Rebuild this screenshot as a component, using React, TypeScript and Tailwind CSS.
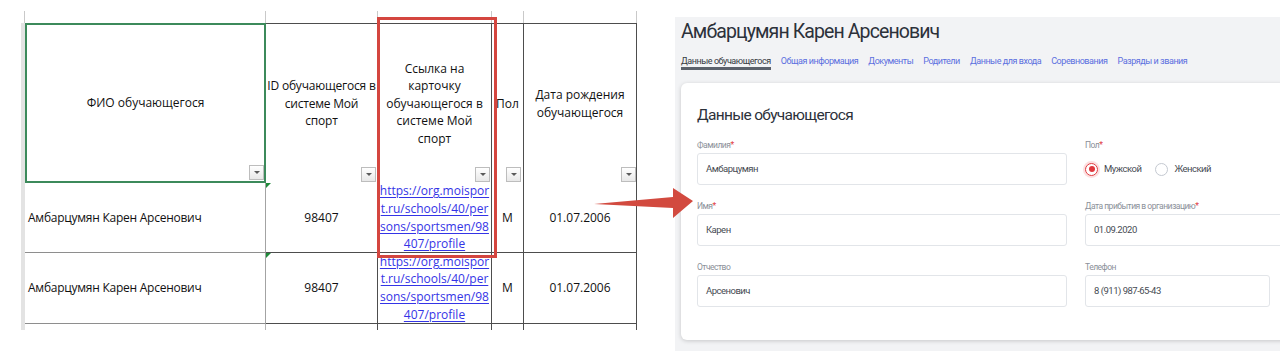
import React from "react";

function FilterButton({ className }: { className: string }) {
  return (
    <div
      className={`absolute bottom-[1px] w-[15px] h-[15px] border border-[#bdbdbd] bg-linear-to-b from-white to-[#e8e8e8] flex items-center justify-center ${className}`}
    >
      <div className="w-0 h-0 border-l-[3px] border-r-[3px] border-t-[3px] border-l-transparent border-r-transparent border-t-[#5a5a5a]" />
    </div>
  );
}

function GreenTick() {
  return (
    <div className="absolute left-0 top-0 w-0 h-0 border-t-[5px] border-r-[5px] border-t-[#1f8a3a] border-r-transparent" />
  );
}

function StudentRow({ h }: { h: string }) {
  return (
    <div className={`flex ${h}`}>
      <div className="w-[241px] border-r border-b border-[#a3a3a3] flex items-center pl-[3px] border-b-[#8e8e8e] tracking-[-0.25px]">
        Амбарцумян Карен Арсенович
      </div>
      <div className="relative w-[112px] border-r border-b border-[#4d4d4d] flex items-center justify-center">
        98407
        <GreenTick />
      </div>
      <div className="w-[114px] border-r border-b border-[#4d4d4d] flex items-center justify-center text-center leading-[17.6px]">
        <a className="text-[#3434e6] underline underline-offset-2">
          https://org.moispor
          <br />
          t.ru/schools/40/per
          <br />
          sons/sportsmen/98
          <br />
          407/profile
        </a>
      </div>
      <div className="w-[32px] border-r border-b border-[#4d4d4d] flex items-center justify-center">М</div>
      <div className="w-[113px] border-r border-b border-[#4d4d4d] flex items-center justify-center">01.07.2006</div>
    </div>
  );
}

function Spreadsheet() {
  return (
    <div className="w-[675px] shrink-0 pt-[11px] pl-[21px] font-['Open_Sans',sans-serif] text-[12px] text-[#111]">
      {/* gridlines above the header row */}
      <div className="flex h-[12px] ml-[3px] border-l border-[#c9c9c9]">
        <div className="w-[241px] border-r border-[#c9c9c9]" />
        <div className="w-[112px] border-r border-[#c9c9c9]" />
        <div className="w-[114px] border-r border-[#c9c9c9]" />
        <div className="w-[32px] border-r border-[#c9c9c9]" />
        <div className="w-[113px] border-r border-[#c9c9c9]" />
      </div>

      <div className="border-l-4 border-[#e3e3e3]">
        {/* header */}
        <div className="flex h-[160px] leading-[17.6px] text-center whitespace-nowrap">
          <div className="relative w-[241px] border-2 border-[#3c8a5b] flex items-center justify-center">
            ФИО обучающегося
            <FilterButton className="right-0" />
          </div>
          <div className="relative w-[112px] border-t border-r border-[#4d4d4d] flex items-center justify-center tracking-[-0.2px]">
            <span>
              ID обучающегося в
              <br />
              системе Мой
              <br />
              спорт
            </span>
            <FilterButton className="right-[1px]" />
          </div>
          <div className="relative w-[114px] border-t border-r border-[#4d4d4d] flex items-center justify-center">
            <span>
              Ссылка на
              <br />
              карточку
              <br />
              обучающегося в
              <br />
              системе Мой
              <br />
              спорт
            </span>
            <FilterButton className="right-[1px]" />
          </div>
          <div className="relative w-[32px] border-t border-r border-[#4d4d4d] flex items-center justify-center">
            Пол
            <FilterButton className="right-[2px]" />
          </div>
          <div className="relative w-[113px] border-t border-r border-[#4d4d4d] flex items-center justify-center">
            <span>
              Дата рождения
              <br />
              обучающегося
            </span>
            <FilterButton className="right-0" />
          </div>
        </div>

        <StudentRow h="h-[70px]" />
        <StudentRow h="h-[71px]" />

        {/* grid stub below the last row */}
        <div className="flex h-[6px]">
          <div className="w-[241px] border-r border-[#b5b5b5]" />
          <div className="w-[112px] border-r border-[#4d4d4d]" />
          <div className="w-[114px] border-r border-[#4d4d4d]" />
          <div className="w-[32px] border-r border-[#4d4d4d]" />
          <div className="w-[113px] border-r border-[#4d4d4d]" />
        </div>
      </div>
    </div>
  );
}

function Label({ text, required }: { text: string; required?: boolean }) {
  return (
    <div className="mb-[2px] text-[8.5px] leading-[12px] text-[#8b9099] tracking-[-0.5px]">
      {text}
      {required && <span className="text-[#e0393e]">*</span>}
    </div>
  );
}

function Field({
  label,
  value,
  required,
  inputClass,
}: {
  label: string;
  value: string;
  required?: boolean;
  inputClass: string;
}) {
  return (
    <div>
      <Label text={label} required={required} />
      <div
        className={`h-[32px] border border-[#e2e5e9] rounded-[3px] pl-[8px] flex items-center text-[9.5px] text-[#464b53] tracking-[-0.5px] ${inputClass}`}
      >
        {value}
      </div>
    </div>
  );
}

function StudentCard() {
  const tabs = ["Общая информация", "Документы", "Родители", "Данные для входа", "Соревнования", "Разряды и звания"];

  return (
    <div className="w-[605px] shrink-0 mt-[17px] bg-[#f2f3f5] pl-[6px] overflow-hidden font-['Roboto',sans-serif]">
      <h1 className="pt-[1px] text-[19.5px] leading-[28px] text-[#2c313a] tracking-[-0.9px] whitespace-nowrap">
        Амбарцумян Карен Арсенович
      </h1>

      <nav className="mt-[9px] flex gap-[10px] text-[9px] leading-[12px] tracking-[-0.45px] whitespace-nowrap">
        <span className="border-b-[3px] border-[#5b616b] text-[#353a42]">Данные обучающегося</span>
        {tabs.map((t) => (
          <span key={t} className="text-[#5b6fdf]">
            {t}
          </span>
        ))}
      </nav>

      <div className="mt-[13px] w-[640px] bg-white rounded-[6px] shadow-[0_1px_4px_rgba(0,0,0,0.18)] pl-[16px] pt-[22px] pb-[33px]">
        <h2 className="text-[15.5px] leading-[20px] text-[#2c313a] tracking-[-0.7px]">Данные обучающегося</h2>

        <div className="mt-[14px] grid grid-cols-[370px_1fr] gap-x-[18px] gap-y-[15px]">
          <Field label="Фамилия" required value="Амбарцумян" inputClass="w-full" />

          <div>
            <Label text="Пол" required />
            <div className="h-[32px] flex items-center text-[9.5px] text-[#464b53] tracking-[-0.5px]">
              <div className="w-[13px] h-[13px] rounded-full border-[1.5px] border-[#e0393e] ring-2 ring-[#fde0e1] flex items-center justify-center">
                <div className="w-[6px] h-[6px] rounded-full bg-[#e0393e]" />
              </div>
              <span className="ml-[6px]">Мужской</span>
              <div className="ml-[14px] w-[13px] h-[13px] rounded-full border border-[#c4c9d1]" />
              <span className="ml-[6px]">Женский</span>
            </div>
          </div>

          <Field label="Имя" required value="Карен" inputClass="w-full" />
          <Field label="Дата прибытия в организацию" required value="01.09.2020" inputClass="w-[220px]" />
          <Field label="Отчество" value="Арсенович" inputClass="w-full" />
          <Field label="Телефон" value="8 (911) 987-65-43" inputClass="w-[185px]" />
        </div>
      </div>
    </div>
  );
}

export default function App() {
  return (
    <div className="relative w-[1280px] h-[351px] bg-white overflow-hidden flex">
      <Spreadsheet />
      <StudentCard />

      {/* annotation: highlighted column */}
      <div className="absolute left-[377px] top-[17px] w-[120px] h-[241px] border-[3px] border-[#d4463f]" />

      {/* annotation: arrow */}
      <svg className="absolute left-[590px] top-[183px]" width="110" height="40" viewBox="0 0 110 40">
        <polygon points="4,21 83,14 83,5 103,18 83,35 83,25" fill="#d24a3f" />
      </svg>
    </div>
  );
}
